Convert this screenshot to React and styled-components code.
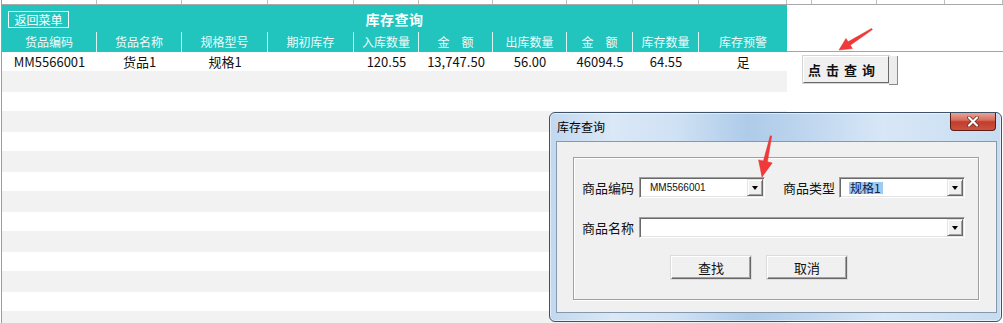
import styled, { createGlobalStyle } from "styled-components";

const GlobalStyle = createGlobalStyle`
	html, body {
		margin: 0;
		padding: 0;
		background: #ffffff;
		overflow: hidden;
	}
	body {
		font-family: "Noto Sans CJK SC", "Noto Sans", sans-serif;
	}
`;

// column widths of the sheet, measured from x = 2
const COLS = "95px 85px 86px 86px 65px 74px 74px 66px 66px 88px";
const TOP_COLS = COLS + " 25px 65px 68px 1fr";

const headers = [
	"货品编码",
	"货品名称",
	"规格型号",
	"期初库存",
	"入库数量",
	"金　额",
	"出库数量",
	"金　额",
	"库存数量",
	"库存预警",
];

const record = [
	"MM5566001",
	"货品1",
	"规格1",
	"",
	"120.55",
	"13,747.50",
	"56.00",
	"46094.5",
	"64.55",
	"足",
];

const Sheet = styled.div`
	position: relative;
	width: 1002px;
	height: 323px;
	margin-left: 1px;
	border-left: 1px solid #9c9c9c;
	box-sizing: border-box;
	overflow: hidden;
`;

const TopStrip = styled.div`
	display: grid;
	grid-template-columns: ${TOP_COLS};
	height: 4px;
	border-bottom: 1px solid #a8a8a8;
`;

const TopCell = styled.div`
	border-right: 1px solid #bdbdbd;
`;

const HeadRow = styled.div`
	display: flex;
	height: 47px;
`;

const Banner = styled.div`
	width: 785px;
	background: #22c4be;
	display: flex;
	flex-direction: column;
`;

const TitleRow = styled.div`
	height: 27px;
	display: grid;
	grid-template-columns: 1fr auto 1fr;
	align-items: center;
`;

const BackButton = styled.div`
	justify-self: start;
	margin-left: 6px;
	margin-top: 1px;
	width: 61px;
	height: 17px;
	box-sizing: border-box;
	border: 1px solid #eefcfb;
	color: #ffffff;
	font-size: 12px;
	line-height: 15px;
	text-align: center;
`;

const Title = styled.div`
	color: #ffffff;
	font-weight: 700;
	font-size: 14px;
	letter-spacing: 0.5px;
`;

const ColRow = styled.div`
	display: grid;
	grid-template-columns: ${COLS};
	height: 20px;
`;

const HeadCell = styled.div`
	border-right: ${(p) => (p.$last ? "none" : "1px solid #d9f5f3")};
	color: #effbfa;
	font-size: 12px;
	line-height: 20px;
	text-align: center;
	white-space: pre;
`;

const HeadSide = styled.div`
	flex: 1;
	border-bottom: 1px solid #a4a4a4;
`;

const BodyRow = styled.div`
	display: flex;
`;

const Grid = styled.div`
	width: 785px;
	display: flex;
	flex-direction: column;
`;

const DataRow = styled.div`
	display: grid;
	grid-template-columns: ${COLS};
	height: 19px;
	background: #ffffff;
`;

const DataCell = styled.div`
	color: #111111;
	font-size: 13px;
	line-height: 19px;
	text-align: center;
	white-space: nowrap;
`;

const Stripe = styled.div`
	height: ${(p) => (p.$shade ? "21px" : "19px")};
	background: ${(p) => (p.$shade ? "#f2f2f2" : "#ffffff")};
`;

const Side = styled.div`
	flex: 1;
	padding: 4px 0 0 16px;
	display: flex;
	align-items: flex-start;
`;

const QueryButton = styled.div`
	width: 86px;
	height: 27px;
	box-sizing: border-box;
	background: #f0f0f0;
	border-top: 1px solid #ffffff;
	border-left: 1px solid #ffffff;
	border-right: 1px solid #6a6a6a;
	border-bottom: 1px solid #6a6a6a;
	box-shadow: 0 0 0 1px #d4d4d4;
	font-size: 13px;
	font-weight: 700;
	letter-spacing: 5px;
	color: #111111;
	line-height: 25px;
	padding-left: 4px;
`;

const QueryRidge = styled.div`
	width: 9px;
	height: 29px;
	box-sizing: border-box;
	background: #ececec;
	border-right: 1px solid #8a8a8a;
	border-bottom: 1px solid #8a8a8a;
`;

/* ---------- dialog window ---------- */

const Window = styled.div`
	position: absolute;
	left: 547px;
	top: 112px;
	width: 453px;
	height: 210px;
	box-sizing: border-box;
	border: 1px solid #3d5269;
	border-radius: 6px;
	background: linear-gradient(
		90deg,
		#c2d8ee 0%,
		#dae8f7 14%,
		#cfe1f4 28%,
		#aecbe9 44%,
		#bdd5ee 56%,
		#d8e7f7 74%,
		#c7dcf1 100%
	);
	box-shadow: inset 0 0 0 1px rgba(255, 255, 255, 0.55);
	display: flex;
	flex-direction: column;
`;

const TitleBar = styled.div`
	height: 28px;
	display: flex;
	justify-content: space-between;
	align-items: flex-start;
`;

const WinTitle = styled.div`
	padding-left: 7px;
	font-size: 12px;
	line-height: 28px;
	color: #000000;
`;

const CloseButton = styled.div`
	width: 46px;
	height: 18px;
	margin-right: 5px;
	box-sizing: border-box;
	border: 1px solid #5e1c12;
	border-top: none;
	border-radius: 0 0 4px 4px;
	background: linear-gradient(#e6a595 0%, #d66d5f 42%, #c23d2c 52%, #cc5242 100%);
	display: flex;
	align-items: center;
	justify-content: center;
`;

const Client = styled.div`
	height: 172px;
	margin: 0 4px 0 6px;
	box-sizing: border-box;
	border: 1px solid #8498ae;
	background: #f0f0f0;
	padding: 15px 17px 0 16px;
`;

const GroupBox = styled.div`
	height: 143px;
	box-sizing: border-box;
	border: 1px solid #a0a0a0;
	box-shadow: inset 1px 1px 0 #ffffff, 1px 1px 0 #ffffff;
	padding: 0 8px;
`;

const FieldRow = styled.div`
	display: flex;
	align-items: center;
	margin-top: ${(p) => p.$gap}px;
	height: 21px;
`;

const Label = styled.div`
	width: ${(p) => p.$w}px;
	margin-left: ${(p) => p.$ml || 0}px;
	font-size: 13px;
	color: #111111;
	white-space: nowrap;
`;

const Combo = styled.div`
	width: ${(p) => p.$w}px;
	height: 21px;
	box-sizing: border-box;
	border: 1px solid;
	border-color: #a0a0a0 #ffffff #ffffff #a0a0a0;
	box-shadow: inset 1px 1px 0 #696969, inset -1px -1px 0 #e3e3e3;
	background: #ffffff;
	padding: 1px;
	display: flex;
`;

const ComboText = styled.div`
	flex: 1;
	padding-left: ${(p) => p.$pad}px;
	display: flex;
	align-items: center;
	font-family: "Liberation Sans", Arial, sans-serif;
	font-size: 10px;
	color: #111111;
`;

const Selected = styled.span`
	background: #9fcbf2;
	color: #10214d;
	font-family: "Noto Sans CJK SC", sans-serif;
	font-size: 12px;
	line-height: 12px;
	padding: 0 2px 0 1px;
`;

const DropButton = styled.div`
	width: 16px;
	box-sizing: border-box;
	background: #f0f0f0;
	border: 1px solid;
	border-color: #e3e3e3 #696969 #696969 #e3e3e3;
	box-shadow: inset 1px 1px 0 #ffffff, inset -1px -1px 0 #a0a0a0;
	display: flex;
	align-items: center;
	justify-content: center;

	&::after {
		content: "";
		border-left: 3.5px solid transparent;
		border-right: 3.5px solid transparent;
		border-top: 4px solid #000000;
		margin-top: 1px;
	}
`;

const ButtonRow = styled.div`
	display: flex;
	gap: 16px;
	margin: 18px 0 0 89px;
`;

const PushButton = styled.div`
	width: 80px;
	height: 23px;
	box-sizing: border-box;
	background: #f0f0f0;
	border: 1px solid;
	border-color: #ffffff #696969 #696969 #ffffff;
	box-shadow: inset -1px -1px 0 #a0a0a0, 0 0 0 1px #dcdcdc;
	font-size: 13px;
	line-height: 21px;
	text-align: center;
	color: #111111;
`;

const ArrowSvg = styled.svg`
	position: absolute;
	left: ${(p) => p.$x}px;
	top: ${(p) => p.$y}px;
	pointer-events: none;
`;

const Arrow = ({ x, y, w, h, points }) => (
	<ArrowSvg $x={x - 1} $y={y} width={w} height={h} viewBox={`${x} ${y} ${w} ${h}`}>
		<polygon points={points} fill="#f03a3a" stroke="#e22a2a" strokeWidth="0.5" strokeLinejoin="round" />
	</ArrowSvg>
);

const Dropdown = ({ width, children, pad = 9 }) => (
	<Combo $w={width}>
		<ComboText $pad={pad}>{children}</ComboText>
		<DropButton />
	</Combo>
);

export default function App() {
	const stripes = Array.from({ length: 14 }, (_, i) => i % 2 === 0);
	return (
		<>
			<GlobalStyle />
			<Sheet>
				<TopStrip>
					{Array.from({ length: 14 }, (_, i) => (
						<TopCell key={i} />
					))}
				</TopStrip>
				<HeadRow>
					<Banner>
						<TitleRow>
							<BackButton>返回菜单</BackButton>
							<Title>库存查询</Title>
							<div />
						</TitleRow>
						<ColRow>
							{headers.map((h, i) => (
								<HeadCell key={i} $last={i === headers.length - 1}>
									{h}
								</HeadCell>
							))}
						</ColRow>
					</Banner>
					<HeadSide />
				</HeadRow>
				<BodyRow>
					<Grid>
						<DataRow>
							{record.map((v, i) => (
								<DataCell key={i}>{v}</DataCell>
							))}
						</DataRow>
						{stripes.map((shade, i) => (
							<Stripe key={i} $shade={shade} />
						))}
					</Grid>
					<Side>
						<QueryButton>点击查询</QueryButton>
						<QueryRidge />
					</Side>
				</BodyRow>

				<Window>
					<TitleBar>
						<WinTitle>库存查询</WinTitle>
						<CloseButton>
							<svg width="14" height="11" viewBox="0 0 14 11">
								<path d="M3 1.5 L11 9.5 M11 1.5 L3 9.5" stroke="#6b2318" strokeWidth="3.6" strokeLinecap="round" />
								<path d="M3 1.5 L11 9.5 M11 1.5 L3 9.5" stroke="#ffffff" strokeWidth="2.2" strokeLinecap="round" />
							</svg>
						</CloseButton>
					</TitleBar>
					<Client>
						<GroupBox>
							<FieldRow $gap={19}>
								<Label $w={57}>商品编码</Label>
								<Dropdown width={126}>MM5566001</Dropdown>
								<Label $w={56} $ml={18}>
									商品类型
								</Label>
								<Dropdown width={126} pad={8}>
									<Selected>规格1</Selected>
								</Dropdown>
							</FieldRow>
							<FieldRow $gap={19}>
								<Label $w={57}>商品名称</Label>
								<Dropdown width={326} />
							</FieldRow>
							<ButtonRow>
								<PushButton>查找</PushButton>
								<PushButton>取消</PushButton>
							</ButtonRow>
						</GroupBox>
					</Client>
				</Window>

				<Arrow
					x={836}
					y={26}
					w={38}
					h={27}
					points="871.4,29.6 849.3,45.2 851.4,48.6 838,50 845,38.4 847.1,41.8 870.6,28.4"
				/>
				<Arrow
					x={754}
					y={133}
					w={20}
					h={47}
					points="770.7,136.1 766.4,161.8 771.2,162.9 761,177 757.6,159.9 762.4,161 769.3,135.8"
				/>
			</Sheet>
		</>
	);
}
